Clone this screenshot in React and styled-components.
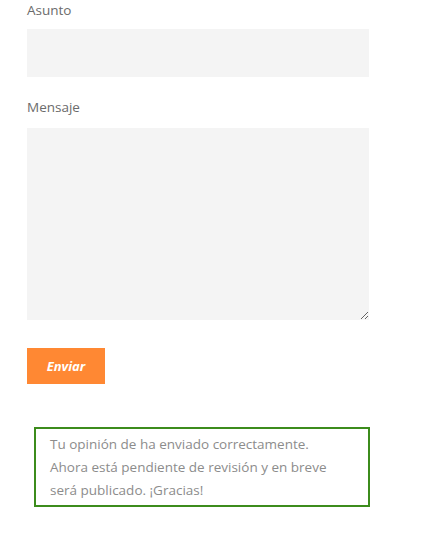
import React from "react";
import styled, { createGlobalStyle } from "styled-components";

const GlobalStyle = createGlobalStyle`
  html, body {
    margin: 0;
    padding: 0;
    background: #ffffff;
    font-family: "Open Sans", "DejaVu Sans", sans-serif;
  }
`;

const Page = styled.div`
  width: 446px;
  padding: 0 0 0 27px;
  box-sizing: border-box;
`;

const Form = styled.form`
  display: flex;
  flex-direction: column;
  width: 342px;
`;

const Label = styled.label`
  display: block;
  font-size: 13.5px;
  line-height: 20px;
  color: #6b6b6b;
  margin: ${(p) => p.$margin || "0"};
`;

const Input = styled.input`
  display: block;
  width: 100%;
  height: 48px;
  border: none;
  outline: none;
  background: #f4f4f4;
  box-sizing: border-box;
  padding: 0 12px;
  font: inherit;
`;

const TextArea = styled.textarea`
  display: block;
  width: 100%;
  height: 192px;
  border: none;
  outline: none;
  background: #f4f4f4;
  box-sizing: border-box;
  padding: 12px;
  font: inherit;
  resize: both;
`;

const Button = styled.button`
  align-self: flex-start;
  margin-top: 28px;
  width: 78px;
  height: 36px;
  border: none;
  background: #ff8833;
  color: #ffffff;
  font-family: "Open Sans", "DejaVu Sans", sans-serif;
  font-size: 13px;
  font-weight: 700;
  font-style: italic;
  cursor: pointer;
`;

const Notice = styled.div`
  margin: 43px 0 0 7px;
  width: 336px;
  box-sizing: border-box;
  border: 2px solid #3c8c1c;
  padding: 4px 14px 3px;
  font-size: 13.5px;
  line-height: 23px;
  color: #8c8c8c;
  white-space: nowrap;
`;

export default function App() {
  return (
    <Page>
      <GlobalStyle />
      <Form onSubmit={(e) => e.preventDefault()}>
        <Label htmlFor="asunto" $margin="0 0 9px">Asunto</Label>
        <Input id="asunto" type="text" />
        <Label htmlFor="mensaje" $margin="20px 0 11px">Mensaje</Label>
        <TextArea id="mensaje" />
        <Button type="submit">Enviar</Button>
      </Form>
      <Notice>
        Tu opinión de ha enviado correctamente.
        <br />
        Ahora está pendiente de revisión y en breve
        <br />
        será publicado. ¡Gracias!
      </Notice>
    </Page>
  );
}
